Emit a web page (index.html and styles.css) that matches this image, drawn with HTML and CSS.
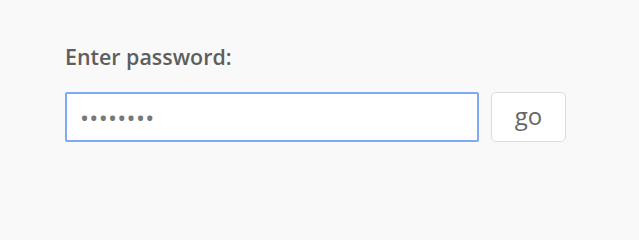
FILE: index.html
```html
<!DOCTYPE html>
<html>
<head>
<meta charset="utf-8">
<link rel="stylesheet" href="styles.css">
</head>
<body>
<div class="page">
  <form class="form">
    <label class="label" for="pw">Enter password:</label>
    <div class="row">
      <input id="pw" class="input" type="password" value="password">
      <button class="btn" type="button">go</button>
    </div>
  </form>
</div>
</body>
</html>
```

FILE: styles.css
```css
html, body {
  margin: 0;
  padding: 0;
  background: #f9f9f9;
}
.page {
  padding: 43px 0 0 65px;
  font-family: "Open Sans", "DejaVu Sans", sans-serif;
}
.form {
  display: flex;
  flex-direction: column;
}
.label {
  font-size: 21.4px;
  font-weight: 600;
  color: #5e5e5e;
  line-height: 28px;
  margin-bottom: 21px;
}
.row {
  display: flex;
  gap: 12px;
}
.input {
  box-sizing: border-box;
  width: 414px;
  height: 50px;
  border: 2px solid #7fa9f0;
  border-radius: 2px;
  background: #fff;
  padding: 0 13px;
  font-family: "Open Sans", sans-serif;
  font-size: 24px;
  color: #777;
  letter-spacing: 0.3px;
  outline: none;
  margin: 0;
}
.btn {
  box-sizing: border-box;
  width: 75px;
  height: 50px;
  border: 1px solid #dcdcdc;
  border-radius: 5px;
  background: #fff;
  font-family: "Open Sans", sans-serif;
  font-size: 24px;
  color: #666;
  padding: 0 0 4px;
  margin: 0;
}
```
